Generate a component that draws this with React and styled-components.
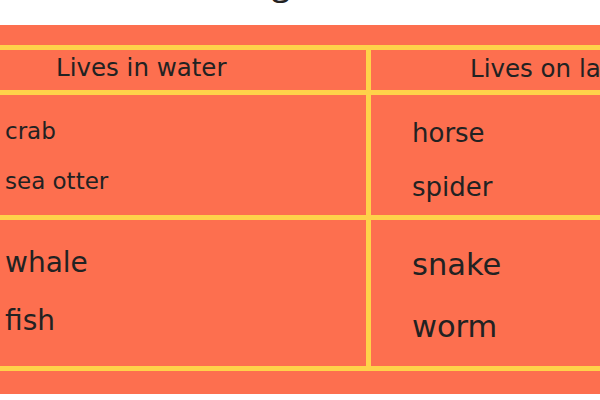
import styled, { createGlobalStyle } from "styled-components";

const GlobalStyle = createGlobalStyle`
  body {
    margin: 0;
    background: #fff;
    font-family: "DejaVu Sans", "Open Sans", sans-serif;
    color: #222;
    overflow: hidden;
  }
`;

const columns = [
  {
    title: "Lives in water",
    titleIndent: 56,
    titleTop: 6,
    indent: 5,
    groups: [
      { size: 23, top: 25, gap: 27, items: ["crab", "sea otter"] },
      { size: 28, top: 29, gap: 30, items: ["whale", "fish"] },
    ],
  },
  {
    title: "Lives on land",
    titleIndent: 99,
    titleTop: 7,
    indent: 41,
    groups: [
      { size: 26, top: 25, gap: 28, items: ["horse", "spider"] },
      { size: 30.5, top: 30, gap: 31, items: ["snake", "worm"] },
    ],
  },
];

const App = () => {
  return (
    <Page>
      <GlobalStyle />
      <Heading>Sorting animals</Heading>
      <Panel>
        <Table>
          {columns.map((col) => (
            <HeadCell key={col.title} indent={col.titleIndent} top={col.titleTop}>
              {col.title}
            </HeadCell>
          ))}
          {[0, 1].map((row) =>
            columns.map((col) => (
              <Cell key={col.title + row} indent={col.indent} top={col.groups[row].top}>
                <List gap={col.groups[row].gap}>
                  {col.groups[row].items.map((item) => (
                    <Item key={item} size={col.groups[row].size}>
                      {item}
                    </Item>
                  ))}
                </List>
              </Cell>
            ))
          )}
        </Table>
      </Panel>
    </Page>
  );
};

export default App;

const Page = styled.div`
  width: 600px;
  height: 400px;
  overflow: hidden;
`;

const Heading = styled.h1`
  margin: -38px 0 0;
  height: 63px;
  font-family: "Open Sans", sans-serif;
  font-size: 34px;
  font-weight: 400;
  line-height: 40px;
  text-align: center;
  color: #222;
`;

const Panel = styled.div`
  background: #fd6f4f;
  padding: 20px 0 23px;
`;

const Table = styled.div`
  display: grid;
  grid-template-columns: 366px 1fr;
  grid-template-rows: 40px 120px 146px;
  gap: 5px;
  padding: 5px 0;
  background: #ffd24a;
  width: 700px;
`;

const HeadCell = styled.div`
  background: #fd6f4f;
  padding: ${({ top }) => top}px 0 0 ${({ indent }) => indent}px;
  font-size: 24.5px;
  line-height: 1;
  color: #222;
  white-space: nowrap;
`;

const Cell = styled.div`
  background: #fd6f4f;
  padding: ${({ top }) => top}px 0 0 ${({ indent }) => indent}px;
`;

const List = styled.div`
  display: flex;
  flex-direction: column;
  gap: ${({ gap }) => gap}px;
`;

const Item = styled.div`
  font-size: ${({ size }) => size}px;
  line-height: 1;
  color: #222;
`;
